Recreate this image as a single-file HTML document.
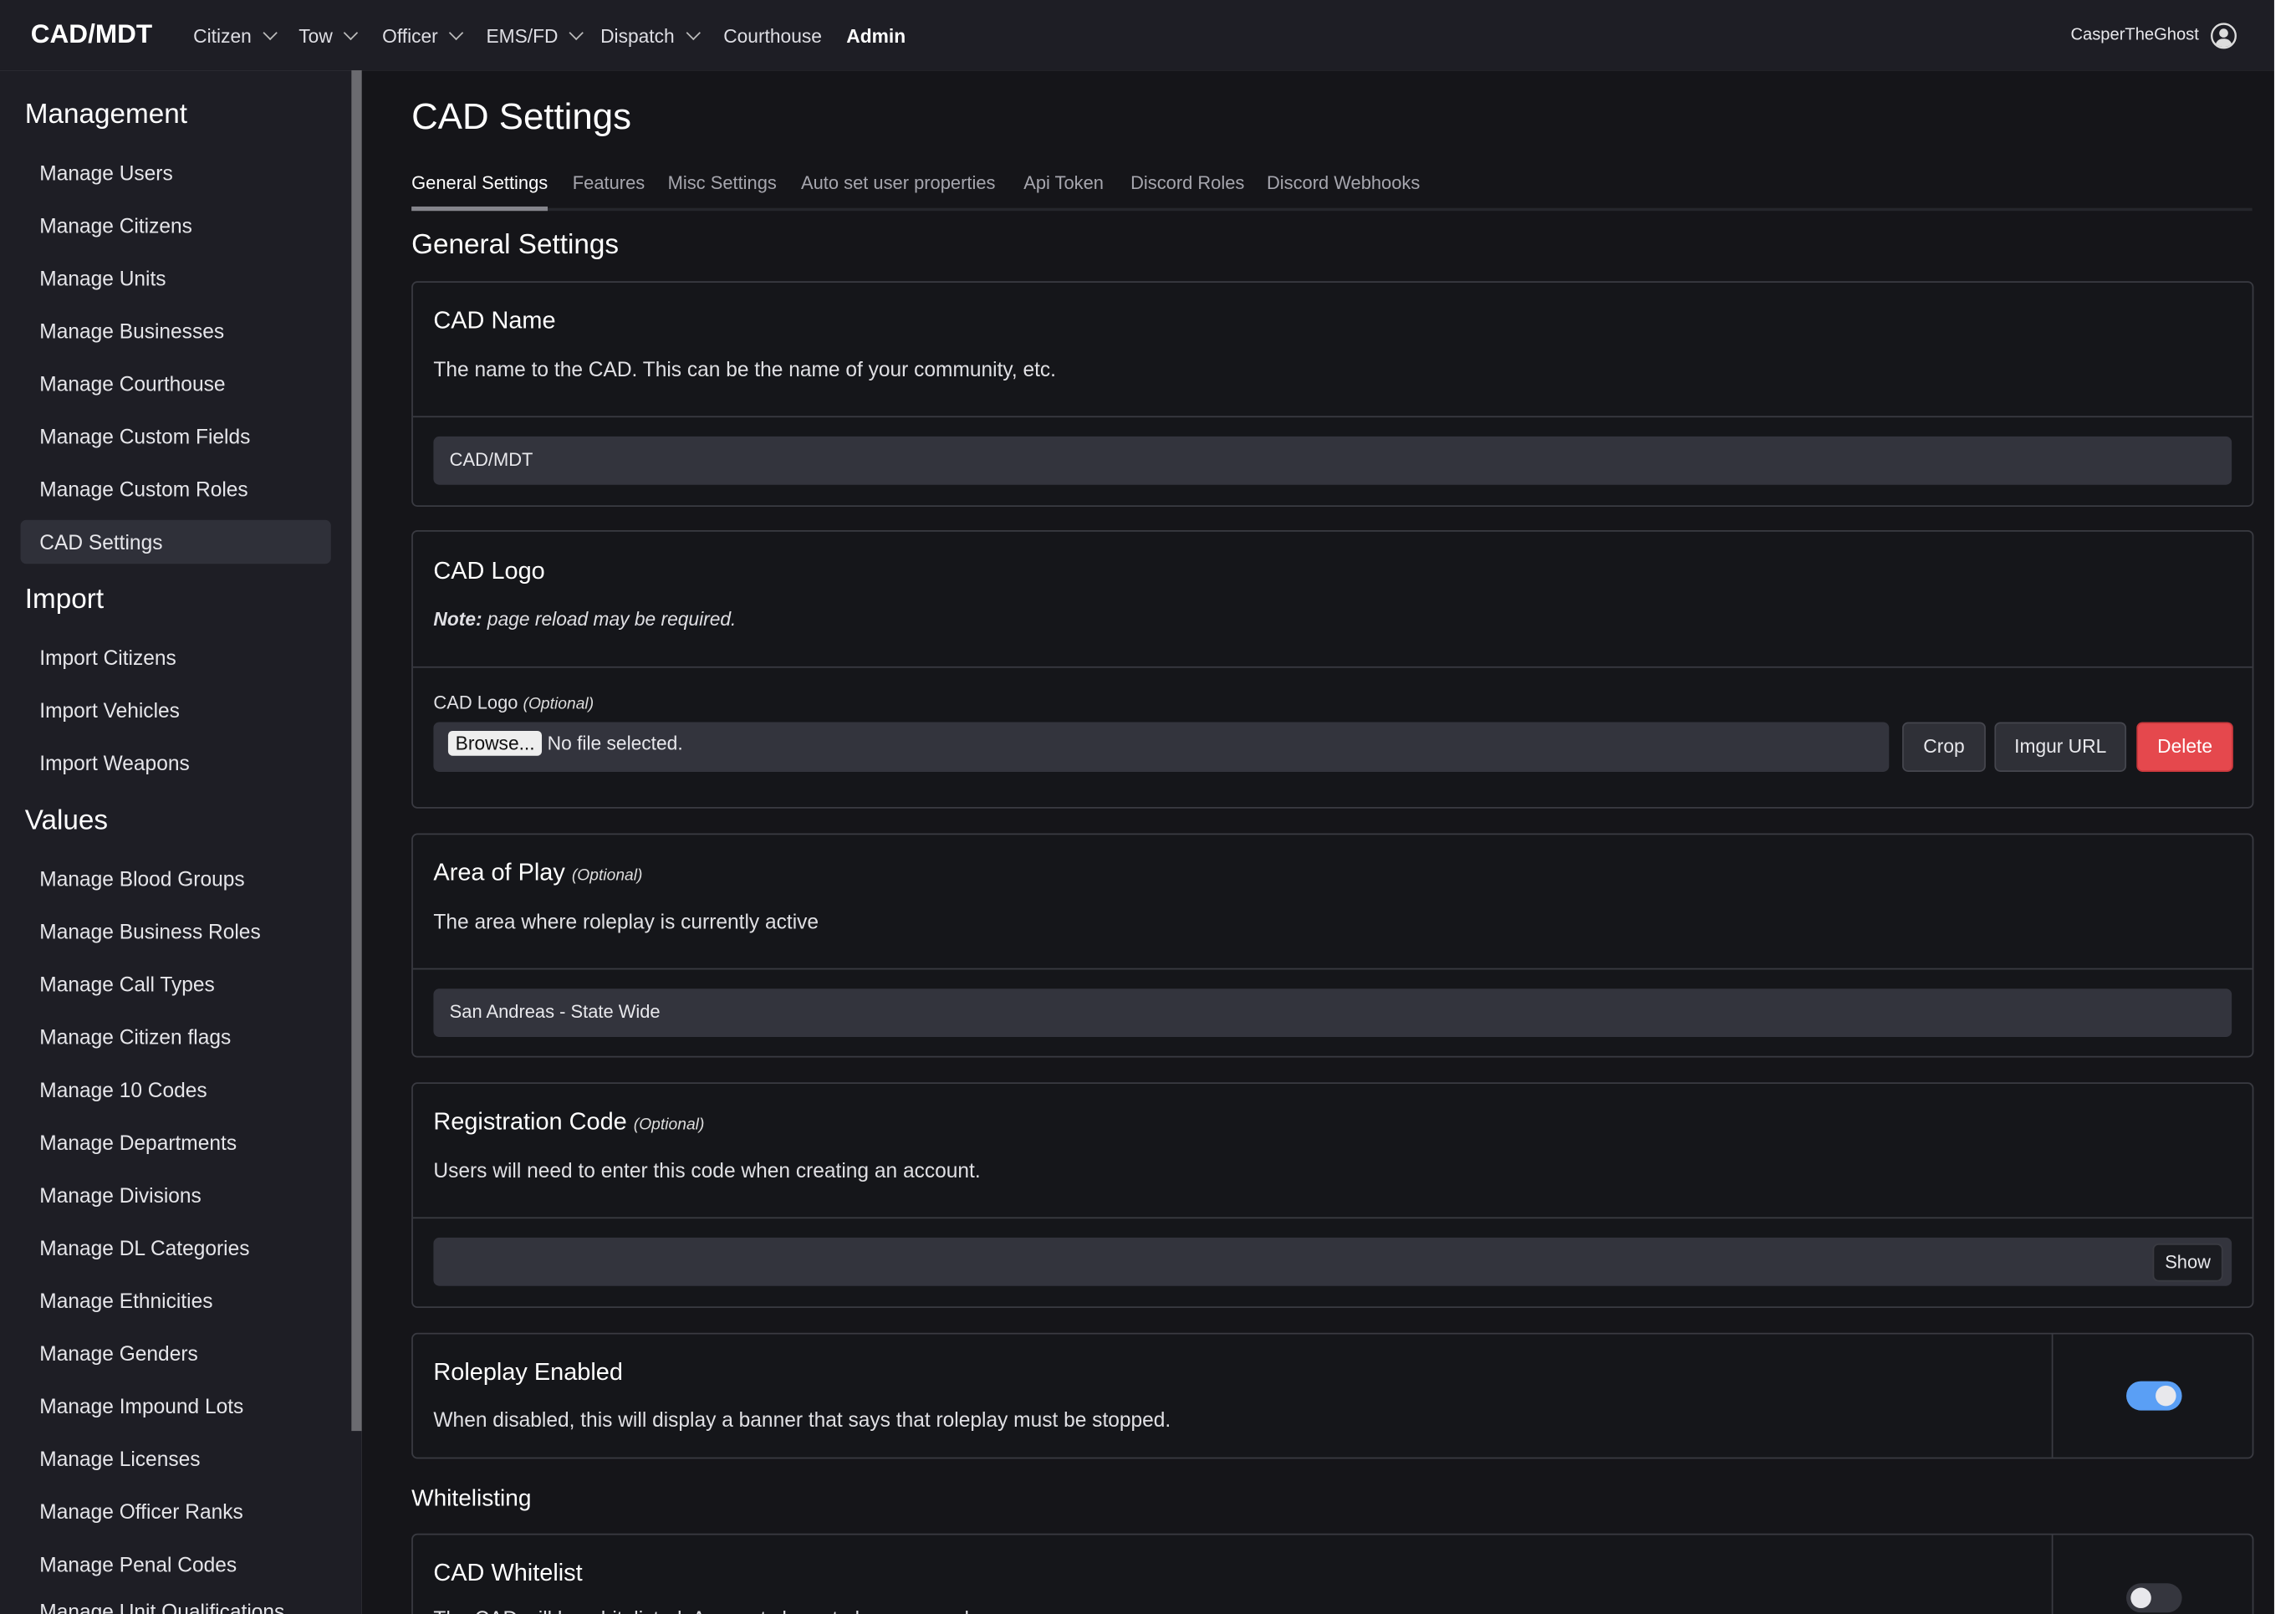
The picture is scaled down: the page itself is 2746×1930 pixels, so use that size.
<!DOCTYPE html>
<html><head><meta charset="utf-8"><style>
*{box-sizing:border-box;margin:0;padding:0}
html,body{width:2746px;height:1930px;overflow:hidden;background:#fff}
#s{position:absolute;left:0;top:0;width:1568px;height:1102px;overflow:hidden;transform:scale(1.7514);transform-origin:0 0;font-family:"Liberation Sans",sans-serif;color:#ececf0}
.a{position:absolute;white-space:nowrap}
#nav{left:0;top:0;width:1553px;height:48px;background:#1e1e25}
#side{left:0;top:48px;width:247px;height:1054px;background:#1e1e25}
#main{left:247px;top:48px;width:1306px;height:1054px;background:#151519}
.n{font-size:13px;top:17px;color:#dedee4}
.chev{display:inline-block;width:7px;height:7px;border-right:1.2px solid #bbb;border-bottom:1.2px solid #bbb;transform:rotate(45deg);margin-left:9px;position:relative;top:-3px}
.h{font-size:19px;left:17px;color:#fff}
.it{font-size:14px;left:27px;color:#e6e6ea}
.card{position:absolute;left:281px;width:1258px;border:1px solid #3a3b42;border-radius:4px;background:#15161a}
.ct{position:absolute;left:14px;font-size:16.5px;color:#fff}
.cd{position:absolute;left:14px;font-size:14px;color:#e0e0e4}
.dv{position:absolute;left:0;right:0;height:1px;background:#3a3b42}
.inp{position:absolute;left:14px;right:14px;height:33px;background:#33343d;border-radius:4px;font-size:12.5px;color:#e8e8ec;padding:9px 11px}
.opt{font-style:italic;font-size:11px;color:#ddd}
.btn{position:absolute;top:130px;height:34px;background:#2f3037;border:1px solid #45464e;border-radius:4px;font-size:13px;color:#e8e8ec;text-align:center;line-height:32px}
</style></head><body><div id="s">
<div class="a" id="nav"></div>
<div class="a" style="left:21px;top:13px;font-size:18px;font-weight:bold;color:#fff">CAD/MDT</div>
<div class="a n" style="left:132px">Citizen<span class="chev"></span></div>
<div class="a n" style="left:204px">Tow<span class="chev"></span></div>
<div class="a n" style="left:261px">Officer<span class="chev"></span></div>
<div class="a n" style="left:332px">EMS/FD<span class="chev"></span></div>
<div class="a n" style="left:410px">Dispatch<span class="chev"></span></div>
<div class="a n" style="left:494px">Courthouse</div>
<div class="a n" style="left:578px;font-weight:bold;color:#fff">Admin</div>
<div class="a" style="left:1414px;top:18px;font-size:11.5px;color:#e8e8ec">CasperTheGhost</div>
<svg class="a" style="left:1509px;top:15px" width="19" height="19" viewBox="0 0 20 20"><circle cx="10" cy="10" r="8.6" fill="none" stroke="#ddd" stroke-width="1.4"/><circle cx="10" cy="8" r="3.2" fill="#ddd"/><path d="M4.3 15.6C5.5 12.8 7.5 12 10 12s4.5.8 5.7 3.6A8 8 0 0 1 4.3 15.6z" fill="#ddd"/></svg>

<div class="a" id="side"></div>
<div class="a" style="left:240px;top:48px;width:7px;height:929px;background:#6b6b70"></div>
<div class="a h" style="top:68px">Management</div>
<div class="a" style="left:14px;top:355px;width:212px;height:30px;background:#2f3039;border-radius:4px"></div>
<div class="a it" style="top:110px">Manage Users</div>
<div class="a it" style="top:146px">Manage Citizens</div>
<div class="a it" style="top:182px">Manage Units</div>
<div class="a it" style="top:218px">Manage Businesses</div>
<div class="a it" style="top:254px">Manage Courthouse</div>
<div class="a it" style="top:290px">Manage Custom Fields</div>
<div class="a it" style="top:326px">Manage Custom Roles</div>
<div class="a it" style="top:362px">CAD Settings</div>
<div class="a h" style="top:399px">Import</div>
<div class="a it" style="top:441px">Import Citizens</div>
<div class="a it" style="top:477px">Import Vehicles</div>
<div class="a it" style="top:513px">Import Weapons</div>
<div class="a h" style="top:550px">Values</div>
<div class="a it" style="top:592px">Manage Blood Groups</div>
<div class="a it" style="top:628px">Manage Business Roles</div>
<div class="a it" style="top:664px">Manage Call Types</div>
<div class="a it" style="top:700px">Manage Citizen flags</div>
<div class="a it" style="top:736px">Manage 10 Codes</div>
<div class="a it" style="top:772px">Manage Departments</div>
<div class="a it" style="top:808px">Manage Divisions</div>
<div class="a it" style="top:844px">Manage DL Categories</div>
<div class="a it" style="top:880px">Manage Ethnicities</div>
<div class="a it" style="top:916px">Manage Genders</div>
<div class="a it" style="top:952px">Manage Impound Lots</div>
<div class="a it" style="top:988px">Manage Licenses</div>
<div class="a it" style="top:1024px">Manage Officer Ranks</div>
<div class="a it" style="top:1060px">Manage Penal Codes</div>
<div class="a it" style="top:1092px">Manage Unit Qualifications</div>

<div class="a" id="main"></div>
<div class="a" style="left:281px;top:66px;font-size:25px;color:#fff">CAD Settings</div>
<div class="a" style="left:281px;top:142px;width:1257px;height:2px;background:#25262c"></div>
<div class="a" style="left:281px;top:141px;width:93px;height:3px;background:#85858c"></div>
<div class="a" style="left:281px;top:118px;font-size:12.5px;color:#fff">General Settings</div>
<div class="a" style="left:391px;top:118px;font-size:12.5px;color:#a6a6ae">Features</div>
<div class="a" style="left:456px;top:118px;font-size:12.5px;color:#a6a6ae">Misc Settings</div>
<div class="a" style="left:547px;top:118px;font-size:12.5px;color:#a6a6ae">Auto set user properties</div>
<div class="a" style="left:699px;top:118px;font-size:12.5px;color:#a6a6ae">Api Token</div>
<div class="a" style="left:772px;top:118px;font-size:12.5px;color:#a6a6ae">Discord Roles</div>
<div class="a" style="left:865px;top:118px;font-size:12.5px;color:#a6a6ae">Discord Webhooks</div>
<div class="a" style="left:281px;top:157px;font-size:19px;color:#fff">General Settings</div>

<div class="card" style="top:192px;height:154px">
<div class="ct" style="top:17px">CAD Name</div>
<div class="cd" style="top:51px">The name to the CAD. This can be the name of your community, etc.</div>
<div class="dv" style="top:91px"></div>
<div class="inp" style="top:105px">CAD/MDT</div>
</div>

<div class="card" style="top:362px;height:190px">
<div class="ct" style="top:18px">CAD Logo</div>
<div class="cd" style="top:52px;font-size:13px;font-style:italic"><b>Note:</b> page reload may be required.</div>
<div class="dv" style="top:92px"></div>
<div class="cd" style="top:110px;font-size:12.5px">CAD Logo <span class="opt">(Optional)</span></div>
<div class="inp" style="top:130px;right:248px;height:34px;padding:6px 10px;font-size:13px"><span style="display:inline-block;background:#eee;color:#111;border-radius:3px;padding:1px 5px;font-size:13px">Browse...</span> No file selected.</div>
<div class="btn" style="left:1017px;width:57px">Crop</div>
<div class="btn" style="left:1080px;width:90px">Imgur URL</div>
<div class="btn" style="left:1177px;width:66px;background:#e5484d;border-color:#c9383c;color:#fff">Delete</div>
</div>

<div class="card" style="top:569px;height:153px">
<div class="ct" style="top:17px">Area of Play <span class="opt">(Optional)</span></div>
<div class="cd" style="top:51px">The area where roleplay is currently active</div>
<div class="dv" style="top:91px"></div>
<div class="inp" style="top:105px">San Andreas - State Wide</div>
</div>

<div class="card" style="top:739px;height:154px">
<div class="ct" style="top:17px">Registration Code <span class="opt">(Optional)</span></div>
<div class="cd" style="top:51px">Users will need to enter this code when creating an account.</div>
<div class="dv" style="top:91px"></div>
<div class="inp" style="top:105px"></div>
<div class="a" style="left:1188px;top:109px;width:48px;height:26px;background:#1b1c21;border:1px solid #3a3b42;border-radius:4px;font-size:12.5px;text-align:center;line-height:24px;color:#e8e8ec">Show</div>
</div>

<div class="card" style="top:910px;height:86px">
<div class="ct" style="top:17px">Roleplay Enabled</div>
<div class="cd" style="top:50px">When disabled, this will display a banner that says that roleplay must be stopped.</div>
<div class="a" style="left:1119px;top:0;width:1px;height:84px;background:#3a3b42"></div>
<div class="a" style="left:1170px;top:32px;width:38px;height:20px;background:#5a9ff5;border-radius:10px"></div>
<div class="a" style="left:1190px;top:35px;width:14px;height:14px;background:#e8e8ec;border-radius:50%"></div>
</div>

<div class="a" style="left:281px;top:1015px;font-size:16px;color:#fff">Whitelisting</div>
<div class="card" style="top:1047px;height:80px">
<div class="ct" style="top:17px">CAD Whitelist</div>
<div class="cd" style="top:49px">The CAD will be whitelisted. Accounts have to be approved.</div>
<div class="a" style="left:1119px;top:0;width:1px;height:80px;background:#3a3b42"></div>
<div class="a" style="left:1170px;top:33px;width:38px;height:20px;background:#35363e;border-radius:10px"></div>
<div class="a" style="left:1173px;top:36px;width:14px;height:14px;background:#e8e8ec;border-radius:50%"></div>
</div>
</div></body></html>
